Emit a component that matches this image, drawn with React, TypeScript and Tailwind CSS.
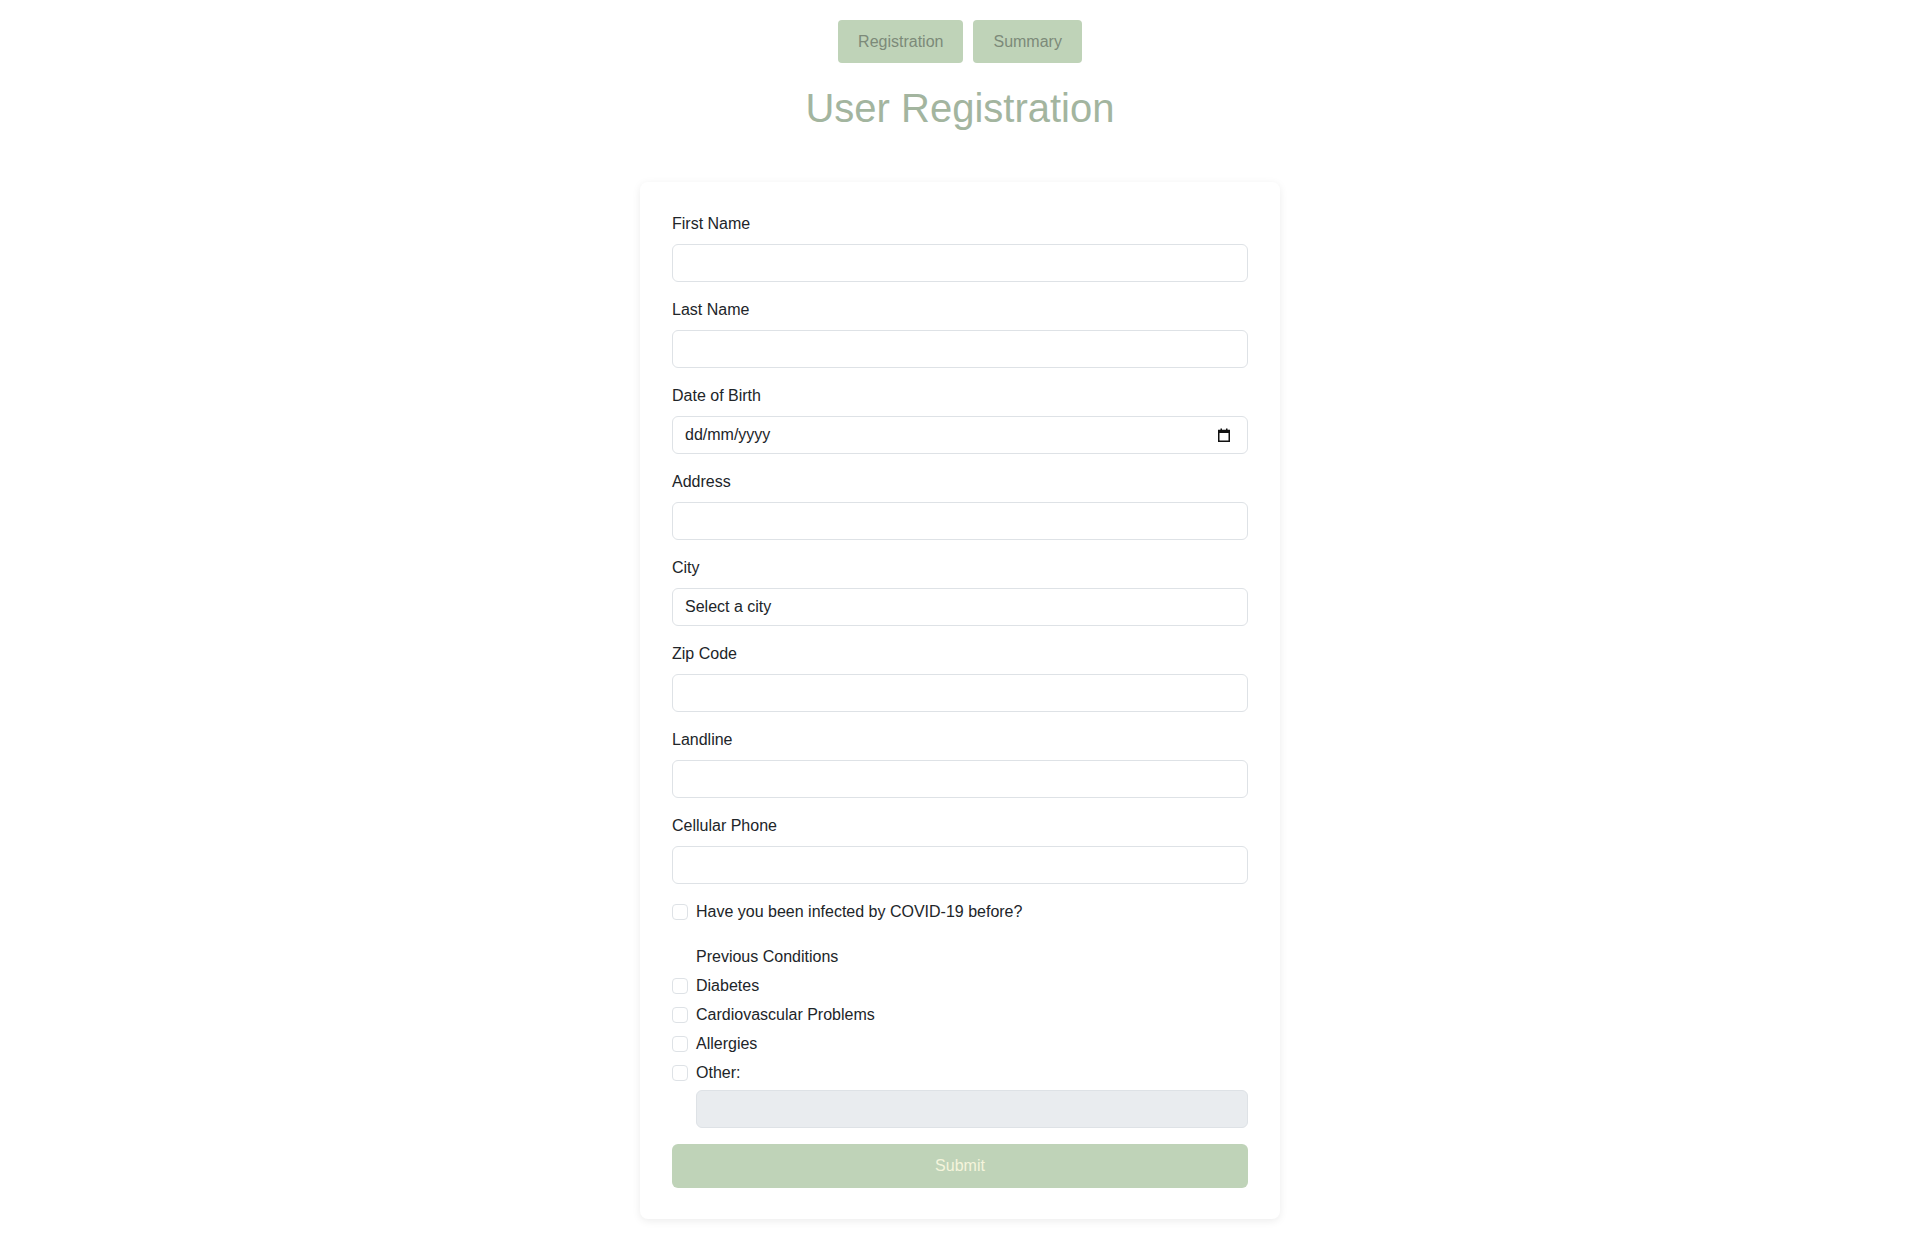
import { useState } from 'react';

const fields = ['First Name', 'Last Name'];
const moreFields = ['Address'];
const phoneFields = ['Zip Code', 'Landline', 'Cellular Phone'];
const conditions = ['Diabetes', 'Cardiovascular Problems', 'Allergies', 'Other:'];

function Field({ label, children }: { label: string; children: React.ReactNode }) {
  return (
    <div className="mb-4">
      <label className="block mb-2 h-6 leading-6 text-[16px] text-[#212529]">{label}</label>
      {children}
    </div>
  );
}

function TextInput() {
  return (
    <input
      type="text"
      className="block w-full h-[38px] px-3 rounded-[6px] border border-[#dee2e6] bg-white text-[16px] text-[#212529] outline-none"
    />
  );
}

function Checkbox({ label }: { label: string }) {
  return (
    <label className="flex items-start h-6 leading-6 text-[16px] text-[#212529]">
      <input
        type="checkbox"
        className="appearance-none w-4 h-4 mt-1 mr-2 shrink-0 rounded-[4px] border border-[#dee2e6] bg-white"
      />
      <span>{label}</span>
    </label>
  );
}

export default function App() {
  const [tab, setTab] = useState('registration');

  return (
    <div
      className="min-h-screen bg-white pt-5 pb-10"
      style={{ fontFamily: '"Liberation Sans", Arial, sans-serif' }}
    >
      <nav className="flex justify-center gap-[10px]">
        <button
          onClick={() => setTab('registration')}
          className="h-[43px] px-5 rounded-[4px] bg-[#bfd3b8] text-[16px] text-[#7c8a79]"
        >
          Registration
        </button>
        <button
          onClick={() => setTab('summary')}
          className="h-[43px] px-5 rounded-[4px] bg-[#bfd3b8] text-[16px] text-[#7c8a79]"
        >
          Summary
        </button>
      </nav>

      <h1 className="mt-[21px] text-center text-[40px] leading-[48px] text-[#a3b59f]">
        User Registration
      </h1>

      {tab === 'registration' && (
        <form
          className="mx-auto mt-[50px] w-[640px] px-8 pt-[30px] pb-[31px] bg-white rounded-[8px] shadow-[0_2px_8px_rgba(0,0,0,0.08)]"
          onSubmit={(e) => e.preventDefault()}
        >
          {fields.map((f) => (
            <Field key={f} label={f}>
              <TextInput />
            </Field>
          ))}

          <Field label="Date of Birth">
            <div className="flex items-center justify-between w-full h-[38px] pl-3 pr-[17px] rounded-[6px] border border-[#dee2e6] bg-white">
              <span className="text-[16px] text-[#212529]">dd/mm/yyyy</span>
              <svg width="12" height="14" viewBox="0 0 12 14" fill="none">
                <rect x="0.75" y="2.5" width="10.5" height="10.75" stroke="#111" strokeWidth="1.5" />
                <rect x="0" y="2" width="12" height="3" fill="#111" />
                <rect x="2.5" y="0.5" width="1.5" height="2" fill="#111" />
                <rect x="8" y="0.5" width="1.5" height="2" fill="#111" />
              </svg>
            </div>
          </Field>

          {moreFields.map((f) => (
            <Field key={f} label={f}>
              <TextInput />
            </Field>
          ))}

          <Field label="City">
            <select className="block w-full h-[38px] px-3 rounded-[6px] border border-[#dee2e6] bg-white text-[16px] text-[#212529] appearance-none outline-none">
              <option>Select a city</option>
            </select>
          </Field>

          {phoneFields.map((f) => (
            <Field key={f} label={f}>
              <TextInput />
            </Field>
          ))}

          <Checkbox label="Have you been infected by COVID-19 before?" />

          <div className="mt-[21px] pl-6 h-6 leading-6 text-[16px] text-[#212529]">
            Previous Conditions
          </div>

          <div className="mt-[5px] flex flex-col gap-[5px]">
            {conditions.map((c) => (
              <Checkbox key={c} label={c} />
            ))}
          </div>

          <div className="mt-[5px] pl-6">
            <input
              type="text"
              disabled
              className="block w-full h-[38px] px-3 rounded-[6px] border border-[#dee2e6] bg-[#e9ecef]"
            />
          </div>

          <button
            type="submit"
            className="mt-4 block w-full h-[44px] rounded-[6px] bg-[#bfd3b8] text-[16px] text-[#f5f5dc]"
          >
            Submit
          </button>
        </form>
      )}
    </div>
  );
}
